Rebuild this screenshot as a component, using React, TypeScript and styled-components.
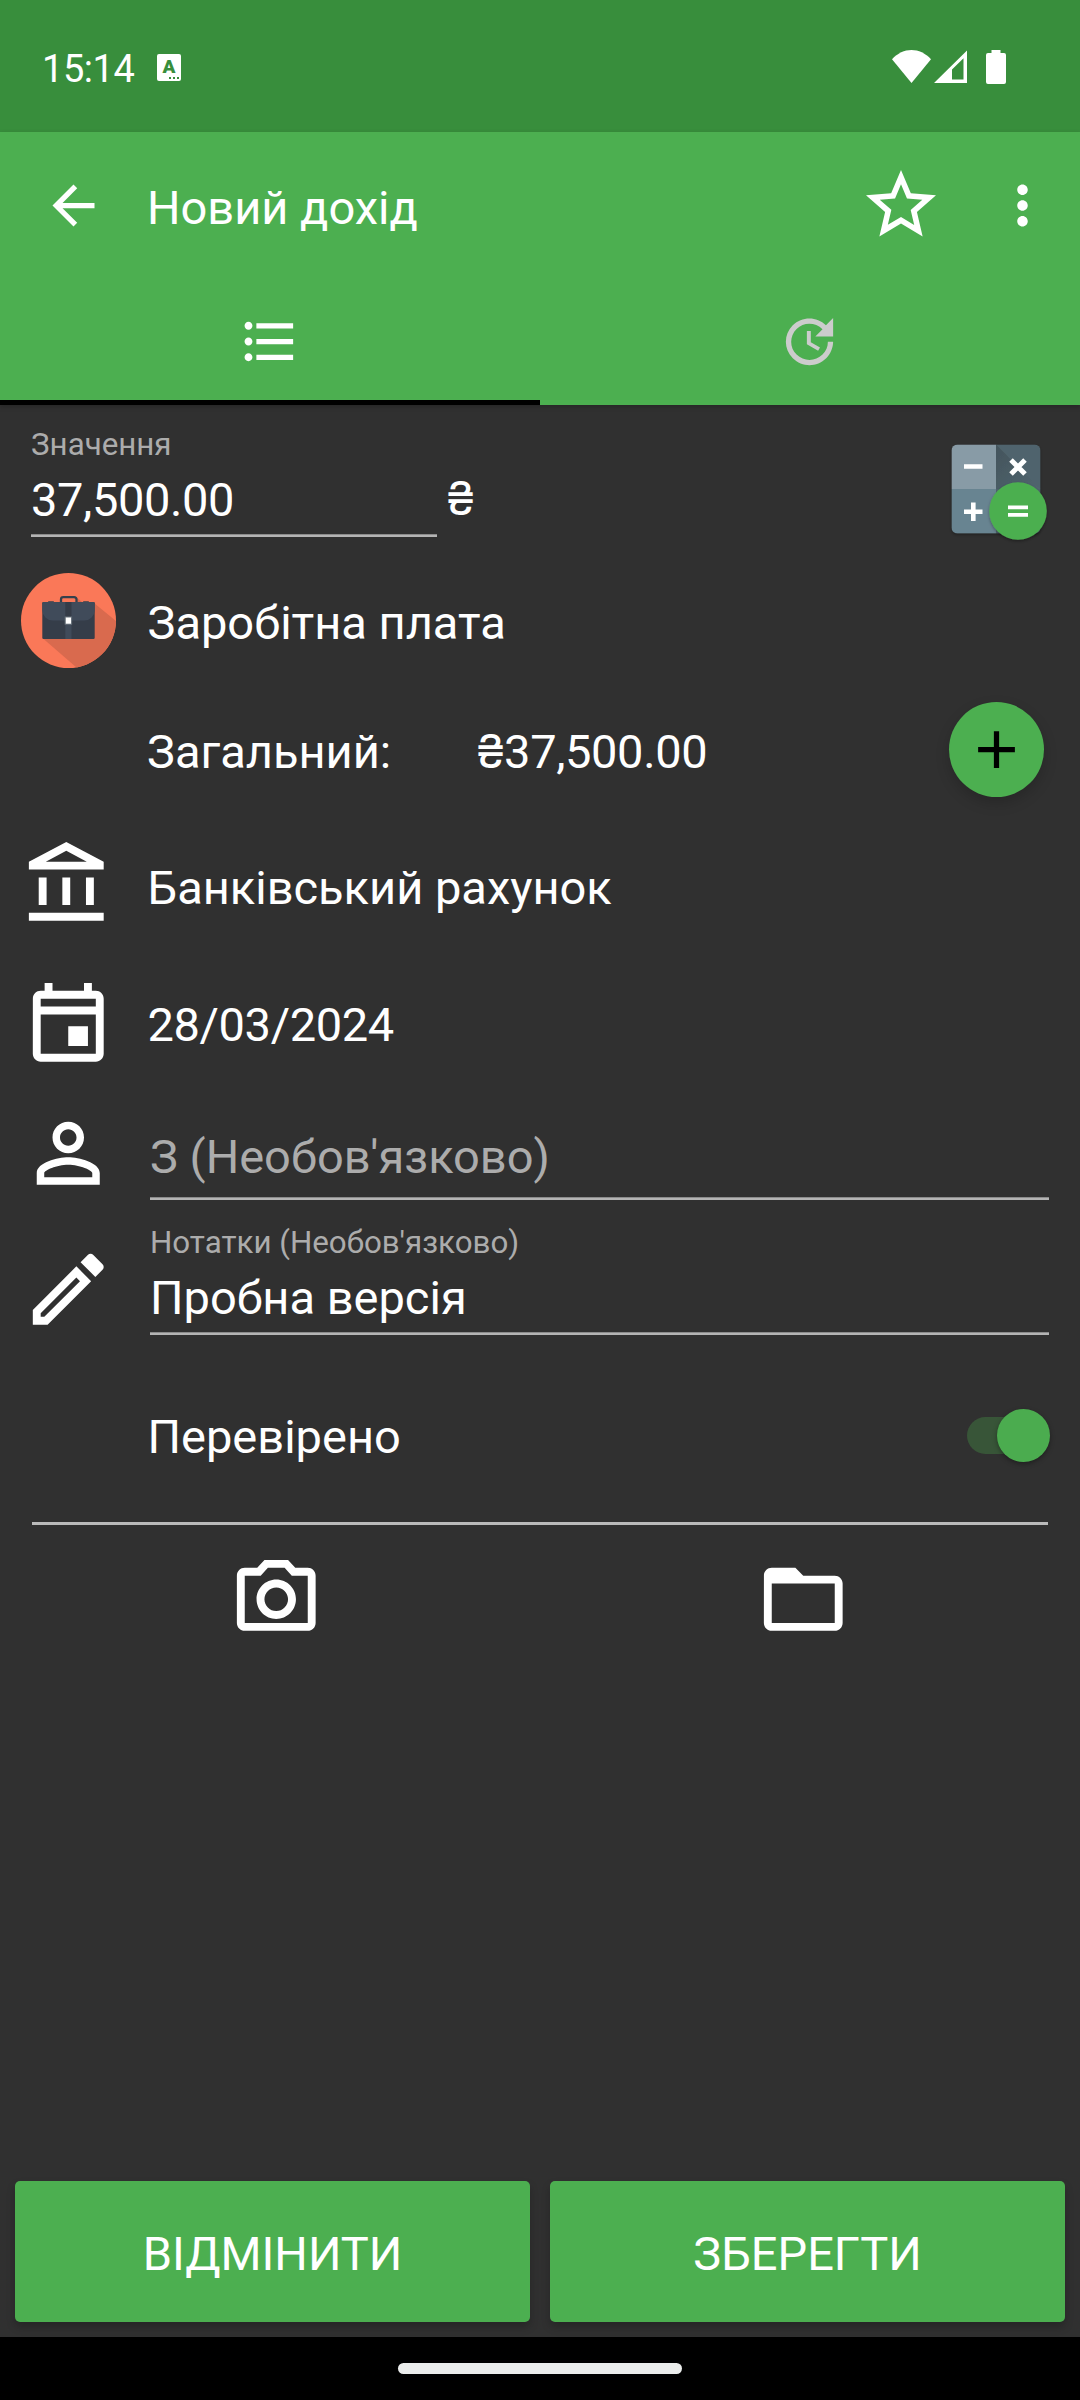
import React from "react";
import styled, { createGlobalStyle } from "styled-components";

const GlobalStyle = createGlobalStyle`
  *, *::before, *::after { box-sizing: border-box; }
  body { margin: 0; background: #303030; }
  svg { display: block; flex: none; }
`;

const color = {
  primary: "#4caf50",
  primaryDark: "#388e3c",
  surface: "#303030",
  text: "#ffffff",
  hint: "#acacac",
};

const Screen = styled.div`
  width: 1080px;
  height: 2400px;
  display: flex;
  flex-direction: column;
  overflow: hidden;
  background: ${color.surface};
  color: ${color.text};
  font-family: Roboto, "Noto Sans", sans-serif;
  font-size: 47px;
  line-height: 56px;
`;

const Digits = styled.span`
  letter-spacing: -0.38px;
`;

const HryvniaSign = styled.span`
  font-family: Inter, sans-serif;
  font-size: 46px;
  line-height: 1;
  margin-right: -1px;
`;

/* ---------- status bar ---------- */

const StatusBar = styled.header`
  height: 132px;
  padding: 2px 74px 0 42px;
  display: flex;
  align-items: center;
  background: ${color.primaryDark};
`;

const Clock = styled.span`
  width: 115px;
  font-size: 38px;
  letter-spacing: -0.45px;
  line-height: 44px;
  padding-top: 3px;
`;

const LanguageBadge = styled.span`
  width: 24px;
  height: 27px;
  display: flex;
  flex-direction: column;
  align-items: center;
  border-radius: 2px;
  background: #fff;
  color: ${color.primaryDark};
  font-size: 19px;
  font-weight: 900;
  line-height: 21px;
  padding-top: 2px;
`;

const BadgeDots = styled.span`
  align-self: flex-end;
  display: flex;
  gap: 2px;
  margin-right: 2px;

  i {
    width: 2px;
    height: 2px;
    background: ${color.primaryDark};
  }
`;

const SystemIcons = styled.div`
  margin-left: auto;
  display: flex;
  align-items: flex-start;
`;

const Spacer = styled.span<{ $w: number }>`
  width: ${(p) => p.$w}px;
`;

/* ---------- app bar ---------- */

const AppBar = styled.div`
  height: 273px;
  display: flex;
  flex-direction: column;
  background: ${color.primary};
  box-shadow: 0 2px 5px rgba(0, 0, 0, 0.22);
`;

const Toolbar = styled.div`
  height: 146px;
  padding: 0 26px 0 42px;
  display: flex;
  align-items: center;
`;

const Title = styled.h1`
  flex: 1;
  margin: 0;
  padding: 6px 0 0 42px;
  font-size: 47px;
  font-weight: 400;
`;

const ToolbarGap = styled.span`
  width: 48px;
`;

const Tabs = styled.nav`
  flex: 1;
  display: grid;
  grid-template-columns: 1fr 1fr;
`;

const Tab = styled.button<{ $active?: boolean }>`
  display: flex;
  align-items: center;
  justify-content: center;
  padding: 5px 1px 0 0;
  border: 0;
  border-bottom: 5px solid ${(p) => (p.$active ? "#000" : "transparent")};
  background: none;
  color: ${(p) => (p.$active ? "#fff" : "#cccccc")};
`;

/* ---------- form ---------- */

const Form = styled.main`
  flex: 1;
  display: flex;
  flex-direction: column;
`;

const AmountRow = styled.section`
  height: 155px;
  padding: 21px 26px 0 31px;
  display: flex;
  align-items: flex-start;
`;

const Field = styled.div<{ $w?: number }>`
  display: flex;
  flex-direction: column;
  ${(p) => (p.$w ? `width: ${p.$w}px;` : "flex: 1;")}
`;

const FieldLabel = styled.label`
  font-size: 31.3px;
  line-height: 37px;
  margin-bottom: 9px;
  color: ${color.hint};
`;

const FieldValue = styled.span<{ $hint?: boolean; $gap?: number }>`
  padding-bottom: ${(p) => p.$gap ?? 6}px;
  color: ${(p) => (p.$hint ? color.hint : color.text)};
`;

const Underline = styled.span`
  height: 3px;
  border-top: 1px solid #8b8b8b;
  background: #b4b4b4;
`;

const Currency = styled.span`
  flex: 1;
  padding: 45px 0 0 9px;
`;

const CalculatorButton = styled.button`
  margin: 10px 0 0;
  padding: 0;
  border: 0;
  background: none;
`;

const Row = styled.section<{ $h: number }>`
  height: ${(p) => p.$h}px;
  display: grid;
  grid-template-columns: 137px 1fr;
  align-items: center;
`;

const IconCell = styled.div`
  display: flex;
  justify-content: center;
`;

const RowText = styled.div<{ $nudge?: number }>`
  padding: ${(p) => p.$nudge ?? 6}px 0 0 10.500px;
`;

const RowBody = styled.div<{ $right: number }>`
  display: flex;
  align-items: center;
  padding-right: ${(p) => p.$right}px;
`;

const TotalLabel = styled.span`
  width: 339px;
  padding: 5px 0 0 10px;
`;

const TotalAmount = styled.span`
  flex: 1;
  padding-top: 5px;
`;

const Fab = styled.button`
  width: 95px;
  height: 95px;
  padding: 0;
  display: flex;
  align-items: center;
  justify-content: center;
  border: 0;
  border-radius: 50%;
  background: ${color.primary};
  color: #000;
  box-shadow: 0 6px 14px rgba(0, 0, 0, 0.18);
`;

const InsetField = styled.div<{ $top: number }>`
  align-self: start;
  display: flex;
  padding: ${(p) => p.$top}px 31px 0 13px;
`;

const SwitchTrack = styled.span`
  width: 79px;
  height: 37px;
  margin-left: auto;
  display: flex;
  align-items: center;
  justify-content: flex-end;
  border-radius: 19px;
  background: #385538;
`;

const SwitchThumb = styled.span`
  width: 53px;
  height: 53px;
  flex: none;
  margin-right: -4px;
  border-radius: 50%;
  background: #4bac4f;
  box-shadow: 0 2px 5px rgba(0, 0, 0, 0.35);
`;

const Divider = styled.hr`
  width: 1016px;
  height: 3px;
  margin: 15px 0 0 32px;
  border: 0;
  background: #bababa;
`;

const Attachments = styled.section`
  padding: 27px 13px 0;
  display: grid;
  grid-template-columns: 1fr 1fr;
  justify-items: center;
`;

const Actions = styled.footer`
  height: 156px;
  padding: 0 15px 15px;
  display: grid;
  grid-template-columns: 1fr 1fr;
  gap: 20px;
`;

const ActionButton = styled.button`
  padding: 4px 0 0;
  border: 0;
  border-radius: 5px;
  background: ${color.primary};
  color: #fff;
  font: inherit;
  box-shadow: 0 5px 9px rgba(0, 0, 0, 0.22);
`;

const NavigationBar = styled.div`
  position: relative;
  height: 63px;
  display: flex;
  justify-content: center;
  padding-top: 26px;
  background: #000;
`;

const HomePill = styled.span`
  width: 284px;
  height: 11px;
  border-radius: 6px;
  background: #ebedec;
`;

/* ---------- icons ---------- */

const Icon = ({ d, size = 94.5 }: { d: string; size?: number }) => (
  <svg width={size} height={size} viewBox="0 0 24 24" fill="currentColor">
    <path d={d} />
  </svg>
);

const paths = {
  back: "M20 11H7.83l5.59-5.59L12 4l-8 8 8 8 1.41-1.41L7.83 13H20v-2z",
  star: "M22 9.24l-7.19-.62L12 2 9.19 8.63 2 9.24l5.46 4.73L5.82 21 12 17.27 18.18 21l-1.63-7.03L22 9.24zM12 15.4l-3.76 2.27 1-4.28-3.32-2.88 4.38-.38L12 6.1l1.71 4.04 4.38.38-3.32 2.88 1 4.28L12 15.4z",
  more: "M12 8c1.1 0 2-.9 2-2s-.9-2-2-2-2 .9-2 2 .9 2 2 2zm0 2c-1.1 0-2 .9-2 2s.9 2 2 2 2-.9 2-2-.9-2-2-2zm0 6c-1.1 0-2 .9-2 2s.9 2 2 2 2-.9 2-2-.9-2-2-2z",
  list: "M4 10.5c-.83 0-1.5.67-1.5 1.5s.67 1.5 1.5 1.5 1.5-.67 1.5-1.5-.67-1.5-1.5-1.5zm0-6c-.83 0-1.5.67-1.5 1.5S3.17 7.5 4 7.5 5.5 6.83 5.5 6 4.83 4.5 4 4.5zm0 12c-.83 0-1.5.68-1.5 1.5s.68 1.5 1.5 1.5 1.5-.68 1.5-1.5-.67-1.5-1.5-1.5zM7 19h14v-2H7v2zm0-6h14v-2H7v2zm0-8v2h14V5H7z",
  update:
    "M21 10.12h-6.78l2.74-2.82c-2.73-2.7-7.15-2.8-9.88-.1-2.73 2.71-2.73 7.08 0 9.79 2.73 2.71 7.15 2.71 9.88 0C18.32 15.65 19 14.08 19 12.1h2c0 1.98-.88 4.55-2.64 6.29-3.51 3.48-9.21 3.48-12.72 0-3.5-3.47-3.53-9.11-.02-12.58 3.51-3.47 9.14-3.47 12.65 0L21 3v7.12zM12.5 8v4.25l3.5 2.08-.72 1.21L11 13V8h1.5z",
  plus: "M19 13h-6v6h-2v-6H5v-2h6V5h2v6h6v2z",
  bank: "M6.5 10h-2v7h2v-7zm6 0h-2v7h2v-7zm8.5 9H2v2h19v-2zm-2.5-9h-2v7h2v-7zm-7-6.74L16.71 6H6.29l5.21-2.74m0-2.26L2 6v2h19V6l-9.5-5z",
  event:
    "M19 4h-1V2h-2v2H8V2H6v2H5c-1.11 0-1.99.9-1.99 2L3 20c0 1.1.89 2 2 2h14c1.1 0 2-.9 2-2V6c0-1.1-.9-2-2-2zm0 16H5V10h14v10zm0-12H5V6h14v2zm-7 5h5v5h-5v-5z",
  person:
    "M12 5.9c1.16 0 2.1.94 2.1 2.1s-.94 2.1-2.1 2.1S9.9 9.16 9.9 8s.94-2.1 2.1-2.1m0 9c2.97 0 6.1 1.46 6.1 2.1v1.1H5.9V17c0-.64 3.13-2.1 6.1-2.1M12 4C9.79 4 8 5.79 8 8s1.79 4 4 4 4-1.79 4-4-1.79-4-4-4zm0 9c-2.67 0-8 1.34-8 4v3h16v-3c0-2.66-5.33-4-8-4z",
  pencil:
    "M14.06 9.02l.92.92L5.92 19H5v-.92l9.06-9.06M17.66 3c-.25 0-.51.1-.7.29l-1.83 1.83 3.75 3.75 1.83-1.83c.39-.39.39-1.02 0-1.41l-2.34-2.34c-.2-.2-.45-.29-.71-.29zm-3.6 3.19L3 17.25V21h3.75L17.81 9.94l-3.75-3.75z",
  camera:
    "M14.12 4l1.83 2H20v12H4V6h4.05l1.83-2h4.24M15 2H9L7.17 4H4c-1.1 0-2 .9-2 2v12c0 1.1.9 2 2 2h16c1.1 0 2-.9 2-2V6c0-1.1-.9-2-2-2h-3.17L15 2zm-3 7c1.65 0 3 1.35 3 3s-1.35 3-3 3-3-1.35-3-3 1.35-3 3-3m0-2c-2.76 0-5 2.24-5 5s2.24 5 5 5 5-2.24 5-5-2.24-5-5-5z",
  folder:
    "M20 6h-8l-2-2H4c-1.1 0-1.99.9-1.99 2L2 18c0 1.1.9 2 2 2h16c1.1 0 2-.9 2-2V8c0-1.1-.9-2-2-2zm0 12H4V8h16v10z",
};

const WifiIcon = () => (
  <svg width="39" height="33" viewBox="0 0 39 33" fill="#fff">
    <path d="M0 9.3C11 -3.1 28 -3.1 39 9.3L19.5 33z" />
  </svg>
);

const SignalIcon = () => (
  <svg width="33" height="33" viewBox="0 0 33 33" fill="#fff" fillRule="evenodd">
    <path d="M0 33L33 0.5V33zM18 19.6V29.5H29.5V8.2z" />
  </svg>
);

const BatteryIcon = () => (
  <svg width="20" height="34" viewBox="0 0 20 34" fill="#fff">
    <path d="M5.5 0h9v3H18a2 2 0 0 1 2 2v27a2 2 0 0 1-2 2H2a2 2 0 0 1-2-2V5a2 2 0 0 1 2-2h3.5z" />
  </svg>
);

const BriefcaseIcon = () => (
  <svg width="95" height="95" viewBox="5 5 95 95">
    <defs>
      <clipPath id="disc">
        <circle cx="52.5" cy="52.5" r="47.5" />
      </clipPath>
    </defs>
    <circle cx="52.5" cy="52.5" r="47.5" fill="#fa7858" />
    <g clipPath="url(#disc)">
      <path d="M78 35L106 58V106H68L27 70.5z" fill="#d96a4e" />
      <path d="M60 29L66 34H60z" fill="#d96a4e" />
    </g>
    <path d="M45 35V31.5a2.3 2.3 0 0 1 2.3-2.3h10.9a2.3 2.3 0 0 1 2.3 2.3V35" fill="none" stroke="#36404c" strokeWidth="2.3" />
    <path d="M31 35l1.5-1.8h5L39 35zM66 35l1.5-1.8h5L74 35z" fill="#36404c" />
    <rect x="26.3" y="34" width="52.4" height="37" rx="1.2" fill="#353d49" />
    <path d="M26.3 35.2a1.2 1.2 0 0 1 1.2-1.2h50a1.2 1.2 0 0 1 1.2 1.2V42a10.5 10.5 0 0 1-10.5 10.5H36.8A10.5 10.5 0 0 1 26.3 42z" fill="#404b5a" />
    <rect x="49.3" y="34" width="6.2" height="18.5" fill="#343c48" />
    <rect x="49.3" y="52.5" width="6.2" height="18.5" fill="#404b5a" />
    <rect x="48.7" y="48.5" width="7.4" height="8.2" fill="#69737c" />
    <rect x="49.8" y="49.5" width="5.2" height="6.2" fill="#fff" />
  </svg>
);

const CalculatorIcon = () => (
  <svg width="110" height="110" viewBox="0 0 110 110">
    <defs>
      <clipPath id="tile">
        <rect x="7.5" y="8.5" width="89" height="89" rx="6" />
      </clipPath>
      <linearGradient id="fold" x1="0" y1="0" x2="1" y2="1">
        <stop offset="0" stopColor="#43545c" />
        <stop offset="0.55" stopColor="#4a5d66" />
        <stop offset="1" stopColor="#52666f" />
      </linearGradient>
      <filter id="drop" x="-20%" y="-20%" width="140%" height="140%">
        <feDropShadow dx="0" dy="1.5" stdDeviation="1.5" floodOpacity="0.35" />
      </filter>
    </defs>
    <g filter="url(#drop)">
      <g clipPath="url(#tile)">
        <rect x="7.5" y="8.5" width="44.5" height="44.5" fill="#889ba6" />
        <rect x="52" y="8.5" width="44.5" height="89" fill="#50646d" />
        <path d="M52 8.5L96.5 53H52z" fill="url(#fold)" />
        <rect x="7.5" y="53" width="44.5" height="44.5" fill="#688491" />
      </g>
    </g>
    <g stroke="#fff" strokeWidth="4.6" fill="none">
      <path d="M20 30.5h18.5M20 75.7h18.5M29.3 66.4v18.6" />
      <path d="M67 24l14 14M81 24l-14 14" strokeWidth="5" />
    </g>
    <circle cx="74" cy="75" r="28.8" fill={color.primary} filter="url(#drop)" />
    <path d="M64 71.3h20M64 78.9h20" stroke="#fff" strokeWidth="3.8" />
  </svg>
);

export default function App() {
  return (
    <Screen>
      <GlobalStyle />
      <StatusBar>
        <Clock>15:14</Clock>
        <LanguageBadge>
          A
          <BadgeDots>
            <i />
            <i />
            <i />
          </BadgeDots>
        </LanguageBadge>
        <SystemIcons>
          <WifiIcon />
          <Spacer $w={3} />
          <SignalIcon />
          <Spacer $w={19} />
          <BatteryIcon />
        </SystemIcons>
      </StatusBar>

      <AppBar>
        <Toolbar>
          <Icon d={paths.back} size={63} />
          <Title>Новий дохід</Title>
          <Icon d={paths.star} size={84} />
          <ToolbarGap />
          <Icon d={paths.more} size={63} />
        </Toolbar>
        <Tabs>
          <Tab $active>
            <Icon d={paths.list} size={63} />
          </Tab>
          <Tab>
            <Icon d={paths.update} size={63} />
          </Tab>
        </Tabs>
      </AppBar>

      <Form>
        <AmountRow>
          <Field $w={406}>
            <FieldLabel>Значення</FieldLabel>
            <FieldValue>
              <Digits>37,500.00</Digits>
            </FieldValue>
            <Underline />
          </Field>
          <Currency>
            <HryvniaSign>₴</HryvniaSign>
          </Currency>
          <CalculatorButton>
            <CalculatorIcon />
          </CalculatorButton>
        </AmountRow>

        <Row $h={121}>
          <IconCell>
            <BriefcaseIcon />
          </IconCell>
          <RowText $nudge={5}>Заробітна плата</RowText>
        </Row>

        <Row $h={137}>
          <IconCell />
          <RowBody $right={36}>
            <TotalLabel>Загальний:</TotalLabel>
            <TotalAmount>
              <HryvniaSign>₴</HryvniaSign>
              <Digits>37,500.00</Digits>
            </TotalAmount>
            <Fab>
              <Icon d={paths.plus} size={63} />
            </Fab>
          </RowBody>
        </Row>

        <Row $h={134}>
          <IconCell>
            <Icon d={paths.bank} />
          </IconCell>
          <RowText>Банківський рахунок</RowText>
        </Row>

        <Row $h={140}>
          <IconCell>
            <Icon d={paths.event} />
          </IconCell>
          <RowText>
            <Digits>28/03/2024</Digits>
          </RowText>
        </Row>

        <Row $h={123}>
          <IconCell>
            <Icon d={paths.person} />
          </IconCell>
          <InsetField $top={37}>
            <Field>
              <FieldValue $hint $gap={12}>
                З (Необов'язково)
              </FieldValue>
              <Underline />
            </Field>
          </InsetField>
        </Row>

        <Row $h={149}>
          <IconCell>
            <Icon d={paths.pencil} />
          </IconCell>
          <InsetField $top={9}>
            <Field>
              <FieldLabel>Нотатки (Необов'язково)</FieldLabel>
              <FieldValue>Пробна версія</FieldValue>
              <Underline />
            </Field>
          </InsetField>
        </Row>

        <Row $h={143}>
          <IconCell />
          <RowBody $right={34}>
            <RowText $nudge={3}>Перевірено</RowText>
            <SwitchTrack>
              <SwitchThumb />
            </SwitchTrack>
          </RowBody>
        </Row>

        <Divider />

        <Attachments>
          <Icon d={paths.camera} />
          <Icon d={paths.folder} />
        </Attachments>
      </Form>

      <Actions>
        <ActionButton>ВІДМІНИТИ</ActionButton>
        <ActionButton>ЗБЕРЕГТИ</ActionButton>
      </Actions>
      <NavigationBar>
        <HomePill />
      </NavigationBar>
    </Screen>
  );
}
